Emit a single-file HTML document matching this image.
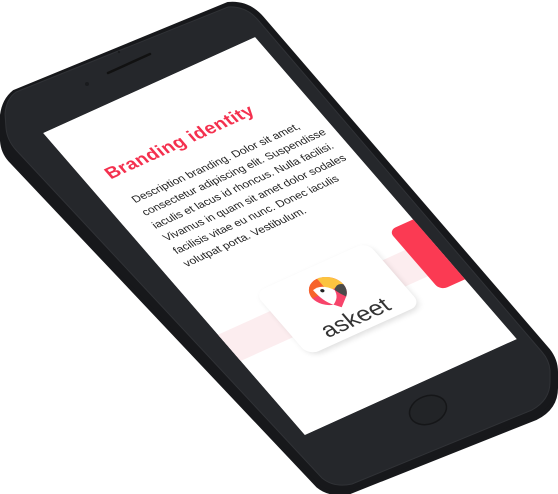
<!DOCTYPE html>
<html><head><meta charset="utf-8"><style>
html,body{margin:0;padding:0;background:#fff;width:558px;height:494px;overflow:hidden}
svg{display:block}
</style></head><body>
<svg width="558" height="494" viewBox="0 0 558 494" xmlns="http://www.w3.org/2000/svg">
<defs>
<filter id="sh" x="-20%" y="-20%" width="140%" height="140%"><feGaussianBlur stdDeviation="4"/></filter>
<clipPath id="sc"><rect x="0" y="0" width="300" height="530"/></clipPath>
</defs>
<path d="M14,92 Q4,100 2,115 L2,135 Q1,150 10,160 L318,486 Q330,496 350,492 L536,418 Q556,408 556,388 L556,372 Q556,360 548,350 L262,18 Q248,2 228,4 Z" fill="#17181b" stroke="#17181b" stroke-width="4" stroke-linejoin="round"/>
<path d="M16,92 Q6,99 5,114 L6,128 Q7,140 16,150 L322,478 Q334,488 352,484 L532,410 Q550,400 550,382 L550,370 Q549,360 542,352 L258,20 Q246,6 228,7 Z" fill="#25272b" stroke="#303236" stroke-width="1"/>
<line x1="108" y1="73" x2="150" y2="54" stroke="#111" stroke-width="2.5" stroke-linecap="round"/>
<circle cx="87" cy="84" r="2" fill="#1a1b1e"/>
<circle cx="119" cy="52" r="1.2" fill="#1a1b1e"/>
<ellipse cx="428" cy="410" rx="19" ry="14" transform="rotate(-20 428 410)" fill="#222427" stroke="#151618" stroke-width="1.5"/>
<g transform="matrix(0.707,-0.32,0.494,0.570,43,133)">
<g clip-path="url(#sc)">
<rect x="0" y="0" width="300" height="530" fill="#ffffff"/>
<rect x="0" y="354" width="300" height="46" fill="#fcedef"/>
<rect x="265" y="320" width="60" height="105" rx="10" fill="#fb3a53"/>
<rect x="76" y="326" width="157" height="110" rx="14" fill="#000" opacity="0.12" filter="url(#sh)"/>
<rect x="74" y="322" width="159" height="110" rx="14" fill="#fff"/>
<text x="28" y="97" font-family="Liberation Sans, sans-serif" font-weight="bold" font-size="24" fill="#f4304e" letter-spacing="0.5">Branding identity</text>
<g font-family="Liberation Sans, sans-serif" font-size="14.5" fill="#222">
<text x="32" y="141">Description branding. Dolor sit amet,</text>
<text x="31" y="163">consectetur adipiscing elit. Suspendisse</text>
<text x="30" y="185">iaculis et lacus id rhoncus. Nulla facilisi.</text>
<text x="30" y="207">Vivamus in quam sit amet dolor sodales</text>
<text x="29" y="229">facilisis vitae eu nunc. Donec iaculis</text>
<text x="28" y="251">volutpat porta. Vestibulum.</text>
</g>
<g transform="translate(150,362)">
<path d="M-22,0 A22,22 0 1 1 14,17 L0,28 L-6,20 A22,22 0 0 1 -22,0 Z" fill="#f7446a"/>
<path d="M-22,0 A22,22 0 0 1 0,-22 L0,0 Z" fill="#f7642b"/>
<path d="M0,-22 A22,22 0 0 1 22,0 L0,0 Z" fill="#fcc440"/>
<path d="M-14,-10 Q0,-14 8,2 Q6,14 -6,20 Q-14,10 -14,-10 Z" fill="#fff"/>
<circle cx="-5" cy="-4" r="2.5" fill="#222"/>
<path d="M8,2 Q16,-6 22,0 Q22,10 14,17 Q10,10 8,2 Z" fill="#4a4a4a"/>
</g>
<text x="109" y="421" font-family="Liberation Sans, sans-serif" font-size="31" fill="#333">askeet</text>
</g>
</g>
</svg>
</body></html>
